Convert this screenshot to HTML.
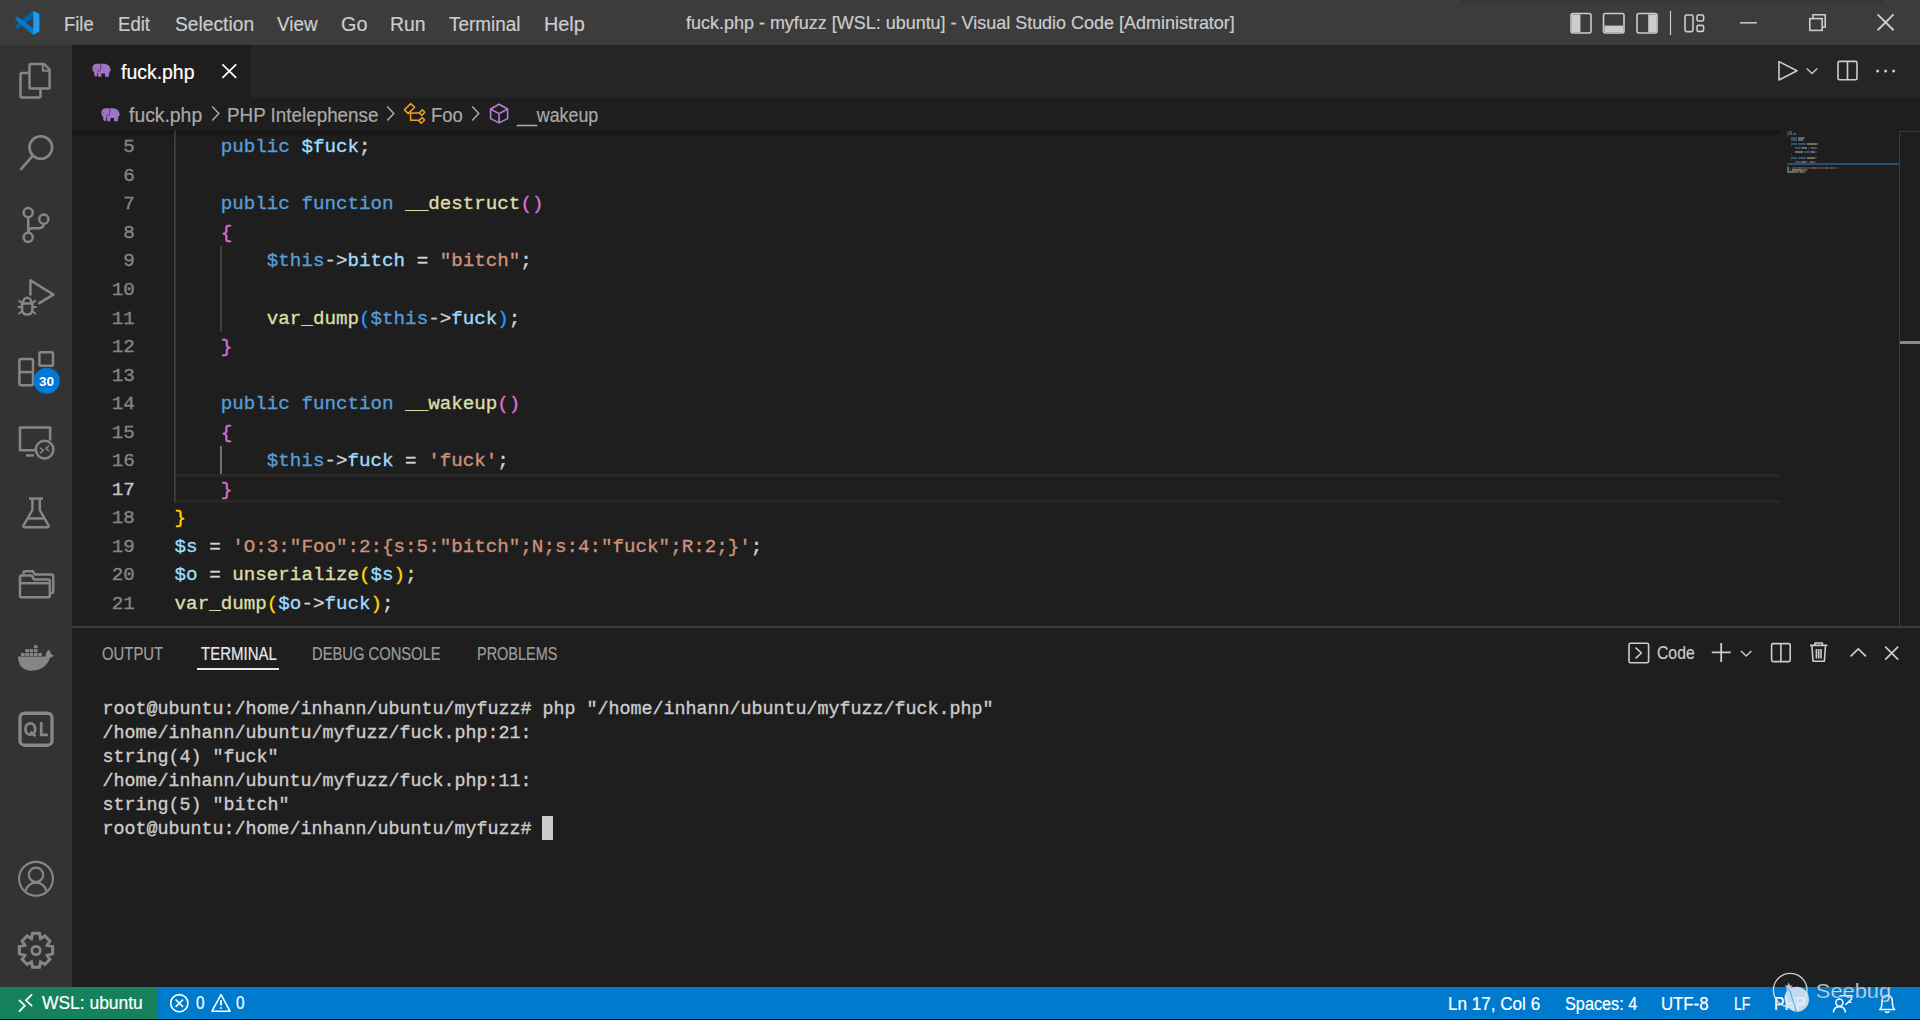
<!DOCTYPE html>
<html><head><meta charset="utf-8">
<style>
html,body{margin:0;padding:0;width:1920px;height:1020px;overflow:hidden;background:#1e1e1e;}
body{position:relative;font-family:"Liberation Sans", sans-serif;}
.a{position:absolute;}
.t{position:absolute;white-space:pre;-webkit-text-stroke:0.2px currentColor;line-height:1;transform-origin:0 0;font-family:"Liberation Sans", sans-serif;}
.cl{position:absolute;-webkit-text-stroke:0.35px currentColor;left:174.6px;white-space:pre;font-family:"Liberation Mono", monospace;font-size:19.22px;line-height:19.22px;color:#d4d4d4;}
.ln{position:absolute;-webkit-text-stroke:0.35px currentColor;left:60px;width:74.8px;text-align:right;font-family:"Liberation Mono", monospace;font-size:19.22px;line-height:19.22px;}
.tl{position:absolute;-webkit-text-stroke:0.35px currentColor;left:102.6px;white-space:pre;font-family:"Liberation Mono", monospace;font-size:18.333px;line-height:18.333px;color:#cccccc;}
svg{position:absolute;overflow:visible;}
</style></head><body>
<!-- title bar -->
<div class="a" style="left:0;top:0;width:1920px;height:45px;background:#3c3c3c"></div>
<div class="a" style="left:1461px;top:0;width:422px;height:5px;background:linear-gradient(#353535,#3c3c3c)"></div>
<!-- activity bar -->
<div class="a" style="left:0;top:45px;width:72px;height:942px;background:#333333"></div>
<!-- tab bar -->
<div class="a" style="left:72px;top:45px;width:1848px;height:53px;background:#252526"></div>
<div class="a" style="left:72px;top:45px;width:179px;height:53px;background:#1e1e1e"></div>
<!-- breadcrumb -->
<div class="a" style="left:72px;top:98px;width:1848px;height:33px;background:#1e1e1e"></div>
<!-- editor scroll shadow -->
<div class="a" style="left:72px;top:131px;width:1707px;height:6px;background:linear-gradient(#111111,rgba(30,30,30,0))"></div>
<!-- current line highlight -->
<div class="a" style="left:176px;top:474px;width:1603px;height:29px;box-sizing:border-box;border-top:3px solid #282828;border-bottom:3px solid #282828"></div>
<!-- indent guides -->
<div class="a" style="left:174px;top:131px;width:1px;height:372px;background:#404040"></div><div class="a" style="left:175px;top:131px;width:1px;height:372px;background:#333333"></div>
<div class="a" style="left:220px;top:246px;width:2px;height:86px;background:#404040"></div>
<div class="a" style="left:220px;top:446px;width:2px;height:28px;background:#707070"></div>
<!-- minimap -->
<div class="a" style="left:1787px;top:163px;width:112px;height:2px;background:#264f78"></div>
<svg style="left:1787px;top:131px;opacity:0.42" width="120" height="50"><rect x="0" y="0" width="1" height="2" fill="#569cd6" fill-opacity="0.45"/><rect x="1" y="0" width="1" height="2" fill="#569cd6" fill-opacity="0.45"/><rect x="2" y="0" width="1" height="2" fill="#569cd6" fill-opacity="1.0"/><rect x="3" y="0" width="1" height="2" fill="#569cd6" fill-opacity="1.0"/><rect x="4" y="0" width="1" height="2" fill="#569cd6" fill-opacity="1.0"/><rect x="0" y="2" width="1" height="2" fill="#569cd6" fill-opacity="1.0"/><rect x="1" y="2" width="1" height="2" fill="#569cd6" fill-opacity="1.0"/><rect x="2" y="2" width="1" height="2" fill="#569cd6" fill-opacity="1.0"/><rect x="3" y="2" width="1" height="2" fill="#569cd6" fill-opacity="1.0"/><rect x="4" y="2" width="1" height="2" fill="#569cd6" fill-opacity="1.0"/><rect x="6" y="2" width="1" height="2" fill="#4ec9b0" fill-opacity="1.0"/><rect x="7" y="2" width="1" height="2" fill="#4ec9b0" fill-opacity="1.0"/><rect x="8" y="2" width="1" height="2" fill="#4ec9b0" fill-opacity="1.0"/><rect x="0" y="4" width="1" height="2" fill="#ffd700" fill-opacity="0.45"/><rect x="4" y="6" width="1" height="2" fill="#569cd6" fill-opacity="1.0"/><rect x="5" y="6" width="1" height="2" fill="#569cd6" fill-opacity="1.0"/><rect x="6" y="6" width="1" height="2" fill="#569cd6" fill-opacity="1.0"/><rect x="7" y="6" width="1" height="2" fill="#569cd6" fill-opacity="1.0"/><rect x="8" y="6" width="1" height="2" fill="#569cd6" fill-opacity="1.0"/><rect x="9" y="6" width="1" height="2" fill="#569cd6" fill-opacity="1.0"/><rect x="11" y="6" width="1" height="2" fill="#9cdcfe" fill-opacity="1.0"/><rect x="12" y="6" width="1" height="2" fill="#9cdcfe" fill-opacity="1.0"/><rect x="13" y="6" width="1" height="2" fill="#9cdcfe" fill-opacity="1.0"/><rect x="14" y="6" width="1" height="2" fill="#9cdcfe" fill-opacity="1.0"/><rect x="15" y="6" width="1" height="2" fill="#9cdcfe" fill-opacity="1.0"/><rect x="16" y="6" width="1" height="2" fill="#9cdcfe" fill-opacity="1.0"/><rect x="17" y="6" width="1" height="2" fill="#d4d4d4" fill-opacity="0.45"/><rect x="4" y="8" width="1" height="2" fill="#569cd6" fill-opacity="1.0"/><rect x="5" y="8" width="1" height="2" fill="#569cd6" fill-opacity="1.0"/><rect x="6" y="8" width="1" height="2" fill="#569cd6" fill-opacity="1.0"/><rect x="7" y="8" width="1" height="2" fill="#569cd6" fill-opacity="1.0"/><rect x="8" y="8" width="1" height="2" fill="#569cd6" fill-opacity="1.0"/><rect x="9" y="8" width="1" height="2" fill="#569cd6" fill-opacity="1.0"/><rect x="11" y="8" width="1" height="2" fill="#9cdcfe" fill-opacity="1.0"/><rect x="12" y="8" width="1" height="2" fill="#9cdcfe" fill-opacity="1.0"/><rect x="13" y="8" width="1" height="2" fill="#9cdcfe" fill-opacity="1.0"/><rect x="14" y="8" width="1" height="2" fill="#9cdcfe" fill-opacity="1.0"/><rect x="15" y="8" width="1" height="2" fill="#9cdcfe" fill-opacity="1.0"/><rect x="16" y="8" width="1" height="2" fill="#d4d4d4" fill-opacity="0.45"/><rect x="4" y="12" width="1" height="2" fill="#569cd6" fill-opacity="1.0"/><rect x="5" y="12" width="1" height="2" fill="#569cd6" fill-opacity="1.0"/><rect x="6" y="12" width="1" height="2" fill="#569cd6" fill-opacity="1.0"/><rect x="7" y="12" width="1" height="2" fill="#569cd6" fill-opacity="1.0"/><rect x="8" y="12" width="1" height="2" fill="#569cd6" fill-opacity="1.0"/><rect x="9" y="12" width="1" height="2" fill="#569cd6" fill-opacity="1.0"/><rect x="11" y="12" width="1" height="2" fill="#569cd6" fill-opacity="1.0"/><rect x="12" y="12" width="1" height="2" fill="#569cd6" fill-opacity="1.0"/><rect x="13" y="12" width="1" height="2" fill="#569cd6" fill-opacity="1.0"/><rect x="14" y="12" width="1" height="2" fill="#569cd6" fill-opacity="1.0"/><rect x="15" y="12" width="1" height="2" fill="#569cd6" fill-opacity="1.0"/><rect x="16" y="12" width="1" height="2" fill="#569cd6" fill-opacity="1.0"/><rect x="17" y="12" width="1" height="2" fill="#569cd6" fill-opacity="1.0"/><rect x="18" y="12" width="1" height="2" fill="#569cd6" fill-opacity="1.0"/><rect x="20" y="12" width="1" height="2" fill="#dcdcaa" fill-opacity="1.0"/><rect x="21" y="12" width="1" height="2" fill="#dcdcaa" fill-opacity="1.0"/><rect x="22" y="12" width="1" height="2" fill="#dcdcaa" fill-opacity="1.0"/><rect x="23" y="12" width="1" height="2" fill="#dcdcaa" fill-opacity="1.0"/><rect x="24" y="12" width="1" height="2" fill="#dcdcaa" fill-opacity="1.0"/><rect x="25" y="12" width="1" height="2" fill="#dcdcaa" fill-opacity="1.0"/><rect x="26" y="12" width="1" height="2" fill="#dcdcaa" fill-opacity="1.0"/><rect x="27" y="12" width="1" height="2" fill="#dcdcaa" fill-opacity="1.0"/><rect x="28" y="12" width="1" height="2" fill="#dcdcaa" fill-opacity="1.0"/><rect x="29" y="12" width="1" height="2" fill="#dcdcaa" fill-opacity="1.0"/><rect x="30" y="12" width="1" height="2" fill="#da70d6" fill-opacity="0.45"/><rect x="31" y="12" width="1" height="2" fill="#da70d6" fill-opacity="0.45"/><rect x="4" y="14" width="1" height="2" fill="#da70d6" fill-opacity="0.45"/><rect x="8" y="16" width="1" height="2" fill="#569cd6" fill-opacity="1.0"/><rect x="9" y="16" width="1" height="2" fill="#569cd6" fill-opacity="1.0"/><rect x="10" y="16" width="1" height="2" fill="#569cd6" fill-opacity="1.0"/><rect x="11" y="16" width="1" height="2" fill="#569cd6" fill-opacity="1.0"/><rect x="12" y="16" width="1" height="2" fill="#569cd6" fill-opacity="1.0"/><rect x="13" y="16" width="1" height="2" fill="#d4d4d4" fill-opacity="0.45"/><rect x="14" y="16" width="1" height="2" fill="#d4d4d4" fill-opacity="0.45"/><rect x="15" y="16" width="1" height="2" fill="#9cdcfe" fill-opacity="1.0"/><rect x="16" y="16" width="1" height="2" fill="#9cdcfe" fill-opacity="1.0"/><rect x="17" y="16" width="1" height="2" fill="#9cdcfe" fill-opacity="1.0"/><rect x="18" y="16" width="1" height="2" fill="#9cdcfe" fill-opacity="1.0"/><rect x="19" y="16" width="1" height="2" fill="#9cdcfe" fill-opacity="1.0"/><rect x="21" y="16" width="1" height="2" fill="#d4d4d4" fill-opacity="0.45"/><rect x="23" y="16" width="1" height="2" fill="#ce9178" fill-opacity="0.45"/><rect x="24" y="16" width="1" height="2" fill="#ce9178" fill-opacity="1.0"/><rect x="25" y="16" width="1" height="2" fill="#ce9178" fill-opacity="1.0"/><rect x="26" y="16" width="1" height="2" fill="#ce9178" fill-opacity="1.0"/><rect x="27" y="16" width="1" height="2" fill="#ce9178" fill-opacity="1.0"/><rect x="28" y="16" width="1" height="2" fill="#ce9178" fill-opacity="1.0"/><rect x="29" y="16" width="1" height="2" fill="#ce9178" fill-opacity="0.45"/><rect x="30" y="16" width="1" height="2" fill="#d4d4d4" fill-opacity="0.45"/><rect x="8" y="20" width="1" height="2" fill="#dcdcaa" fill-opacity="1.0"/><rect x="9" y="20" width="1" height="2" fill="#dcdcaa" fill-opacity="1.0"/><rect x="10" y="20" width="1" height="2" fill="#dcdcaa" fill-opacity="1.0"/><rect x="11" y="20" width="1" height="2" fill="#dcdcaa" fill-opacity="1.0"/><rect x="12" y="20" width="1" height="2" fill="#dcdcaa" fill-opacity="1.0"/><rect x="13" y="20" width="1" height="2" fill="#dcdcaa" fill-opacity="1.0"/><rect x="14" y="20" width="1" height="2" fill="#dcdcaa" fill-opacity="1.0"/><rect x="15" y="20" width="1" height="2" fill="#dcdcaa" fill-opacity="1.0"/><rect x="16" y="20" width="1" height="2" fill="#179fff" fill-opacity="0.45"/><rect x="17" y="20" width="1" height="2" fill="#569cd6" fill-opacity="1.0"/><rect x="18" y="20" width="1" height="2" fill="#569cd6" fill-opacity="1.0"/><rect x="19" y="20" width="1" height="2" fill="#569cd6" fill-opacity="1.0"/><rect x="20" y="20" width="1" height="2" fill="#569cd6" fill-opacity="1.0"/><rect x="21" y="20" width="1" height="2" fill="#569cd6" fill-opacity="1.0"/><rect x="22" y="20" width="1" height="2" fill="#d4d4d4" fill-opacity="0.45"/><rect x="23" y="20" width="1" height="2" fill="#d4d4d4" fill-opacity="0.45"/><rect x="24" y="20" width="1" height="2" fill="#9cdcfe" fill-opacity="1.0"/><rect x="25" y="20" width="1" height="2" fill="#9cdcfe" fill-opacity="1.0"/><rect x="26" y="20" width="1" height="2" fill="#9cdcfe" fill-opacity="1.0"/><rect x="27" y="20" width="1" height="2" fill="#9cdcfe" fill-opacity="1.0"/><rect x="28" y="20" width="1" height="2" fill="#179fff" fill-opacity="0.45"/><rect x="29" y="20" width="1" height="2" fill="#d4d4d4" fill-opacity="0.45"/><rect x="4" y="22" width="1" height="2" fill="#da70d6" fill-opacity="0.45"/><rect x="4" y="26" width="1" height="2" fill="#569cd6" fill-opacity="1.0"/><rect x="5" y="26" width="1" height="2" fill="#569cd6" fill-opacity="1.0"/><rect x="6" y="26" width="1" height="2" fill="#569cd6" fill-opacity="1.0"/><rect x="7" y="26" width="1" height="2" fill="#569cd6" fill-opacity="1.0"/><rect x="8" y="26" width="1" height="2" fill="#569cd6" fill-opacity="1.0"/><rect x="9" y="26" width="1" height="2" fill="#569cd6" fill-opacity="1.0"/><rect x="11" y="26" width="1" height="2" fill="#569cd6" fill-opacity="1.0"/><rect x="12" y="26" width="1" height="2" fill="#569cd6" fill-opacity="1.0"/><rect x="13" y="26" width="1" height="2" fill="#569cd6" fill-opacity="1.0"/><rect x="14" y="26" width="1" height="2" fill="#569cd6" fill-opacity="1.0"/><rect x="15" y="26" width="1" height="2" fill="#569cd6" fill-opacity="1.0"/><rect x="16" y="26" width="1" height="2" fill="#569cd6" fill-opacity="1.0"/><rect x="17" y="26" width="1" height="2" fill="#569cd6" fill-opacity="1.0"/><rect x="18" y="26" width="1" height="2" fill="#569cd6" fill-opacity="1.0"/><rect x="20" y="26" width="1" height="2" fill="#dcdcaa" fill-opacity="1.0"/><rect x="21" y="26" width="1" height="2" fill="#dcdcaa" fill-opacity="1.0"/><rect x="22" y="26" width="1" height="2" fill="#dcdcaa" fill-opacity="1.0"/><rect x="23" y="26" width="1" height="2" fill="#dcdcaa" fill-opacity="1.0"/><rect x="24" y="26" width="1" height="2" fill="#dcdcaa" fill-opacity="1.0"/><rect x="25" y="26" width="1" height="2" fill="#dcdcaa" fill-opacity="1.0"/><rect x="26" y="26" width="1" height="2" fill="#dcdcaa" fill-opacity="1.0"/><rect x="27" y="26" width="1" height="2" fill="#dcdcaa" fill-opacity="1.0"/><rect x="28" y="26" width="1" height="2" fill="#da70d6" fill-opacity="0.45"/><rect x="29" y="26" width="1" height="2" fill="#da70d6" fill-opacity="0.45"/><rect x="4" y="28" width="1" height="2" fill="#da70d6" fill-opacity="0.45"/><rect x="8" y="30" width="1" height="2" fill="#569cd6" fill-opacity="1.0"/><rect x="9" y="30" width="1" height="2" fill="#569cd6" fill-opacity="1.0"/><rect x="10" y="30" width="1" height="2" fill="#569cd6" fill-opacity="1.0"/><rect x="11" y="30" width="1" height="2" fill="#569cd6" fill-opacity="1.0"/><rect x="12" y="30" width="1" height="2" fill="#569cd6" fill-opacity="1.0"/><rect x="13" y="30" width="1" height="2" fill="#d4d4d4" fill-opacity="0.45"/><rect x="14" y="30" width="1" height="2" fill="#d4d4d4" fill-opacity="0.45"/><rect x="15" y="30" width="1" height="2" fill="#9cdcfe" fill-opacity="1.0"/><rect x="16" y="30" width="1" height="2" fill="#9cdcfe" fill-opacity="1.0"/><rect x="17" y="30" width="1" height="2" fill="#9cdcfe" fill-opacity="1.0"/><rect x="18" y="30" width="1" height="2" fill="#9cdcfe" fill-opacity="1.0"/><rect x="20" y="30" width="1" height="2" fill="#d4d4d4" fill-opacity="0.45"/><rect x="22" y="30" width="1" height="2" fill="#ce9178" fill-opacity="0.45"/><rect x="23" y="30" width="1" height="2" fill="#ce9178" fill-opacity="1.0"/><rect x="24" y="30" width="1" height="2" fill="#ce9178" fill-opacity="1.0"/><rect x="25" y="30" width="1" height="2" fill="#ce9178" fill-opacity="1.0"/><rect x="26" y="30" width="1" height="2" fill="#ce9178" fill-opacity="1.0"/><rect x="27" y="30" width="1" height="2" fill="#ce9178" fill-opacity="0.45"/><rect x="28" y="30" width="1" height="2" fill="#d4d4d4" fill-opacity="0.45"/><rect x="4" y="32" width="1" height="2" fill="#da70d6" fill-opacity="0.45"/><rect x="0" y="34" width="1" height="2" fill="#ffd700" fill-opacity="0.45"/><rect x="0" y="36" width="1" height="2" fill="#9cdcfe" fill-opacity="1.0"/><rect x="1" y="36" width="1" height="2" fill="#9cdcfe" fill-opacity="1.0"/><rect x="3" y="36" width="1" height="2" fill="#d4d4d4" fill-opacity="0.45"/><rect x="5" y="36" width="1" height="2" fill="#ce9178" fill-opacity="0.45"/><rect x="6" y="36" width="1" height="2" fill="#ce9178" fill-opacity="1.0"/><rect x="7" y="36" width="1" height="2" fill="#ce9178" fill-opacity="0.45"/><rect x="8" y="36" width="1" height="2" fill="#ce9178" fill-opacity="1.0"/><rect x="9" y="36" width="1" height="2" fill="#ce9178" fill-opacity="0.45"/><rect x="10" y="36" width="1" height="2" fill="#ce9178" fill-opacity="0.45"/><rect x="11" y="36" width="1" height="2" fill="#ce9178" fill-opacity="1.0"/><rect x="12" y="36" width="1" height="2" fill="#ce9178" fill-opacity="1.0"/><rect x="13" y="36" width="1" height="2" fill="#ce9178" fill-opacity="1.0"/><rect x="14" y="36" width="1" height="2" fill="#ce9178" fill-opacity="0.45"/><rect x="15" y="36" width="1" height="2" fill="#ce9178" fill-opacity="0.45"/><rect x="16" y="36" width="1" height="2" fill="#ce9178" fill-opacity="1.0"/><rect x="17" y="36" width="1" height="2" fill="#ce9178" fill-opacity="0.45"/><rect x="18" y="36" width="1" height="2" fill="#ce9178" fill-opacity="0.45"/><rect x="19" y="36" width="1" height="2" fill="#ce9178" fill-opacity="1.0"/><rect x="20" y="36" width="1" height="2" fill="#ce9178" fill-opacity="0.45"/><rect x="21" y="36" width="1" height="2" fill="#ce9178" fill-opacity="1.0"/><rect x="22" y="36" width="1" height="2" fill="#ce9178" fill-opacity="0.45"/><rect x="23" y="36" width="1" height="2" fill="#ce9178" fill-opacity="0.45"/><rect x="24" y="36" width="1" height="2" fill="#ce9178" fill-opacity="1.0"/><rect x="25" y="36" width="1" height="2" fill="#ce9178" fill-opacity="1.0"/><rect x="26" y="36" width="1" height="2" fill="#ce9178" fill-opacity="1.0"/><rect x="27" y="36" width="1" height="2" fill="#ce9178" fill-opacity="1.0"/><rect x="28" y="36" width="1" height="2" fill="#ce9178" fill-opacity="1.0"/><rect x="29" y="36" width="1" height="2" fill="#ce9178" fill-opacity="0.45"/><rect x="30" y="36" width="1" height="2" fill="#ce9178" fill-opacity="0.45"/><rect x="31" y="36" width="1" height="2" fill="#ce9178" fill-opacity="1.0"/><rect x="32" y="36" width="1" height="2" fill="#ce9178" fill-opacity="0.45"/><rect x="33" y="36" width="1" height="2" fill="#ce9178" fill-opacity="1.0"/><rect x="34" y="36" width="1" height="2" fill="#ce9178" fill-opacity="0.45"/><rect x="35" y="36" width="1" height="2" fill="#ce9178" fill-opacity="1.0"/><rect x="36" y="36" width="1" height="2" fill="#ce9178" fill-opacity="0.45"/><rect x="37" y="36" width="1" height="2" fill="#ce9178" fill-opacity="0.45"/><rect x="38" y="36" width="1" height="2" fill="#ce9178" fill-opacity="1.0"/><rect x="39" y="36" width="1" height="2" fill="#ce9178" fill-opacity="1.0"/><rect x="40" y="36" width="1" height="2" fill="#ce9178" fill-opacity="1.0"/><rect x="41" y="36" width="1" height="2" fill="#ce9178" fill-opacity="1.0"/><rect x="42" y="36" width="1" height="2" fill="#ce9178" fill-opacity="0.45"/><rect x="43" y="36" width="1" height="2" fill="#ce9178" fill-opacity="0.45"/><rect x="44" y="36" width="1" height="2" fill="#ce9178" fill-opacity="1.0"/><rect x="45" y="36" width="1" height="2" fill="#ce9178" fill-opacity="0.45"/><rect x="46" y="36" width="1" height="2" fill="#ce9178" fill-opacity="1.0"/><rect x="47" y="36" width="1" height="2" fill="#ce9178" fill-opacity="0.45"/><rect x="48" y="36" width="1" height="2" fill="#ce9178" fill-opacity="0.45"/><rect x="49" y="36" width="1" height="2" fill="#ce9178" fill-opacity="0.45"/><rect x="50" y="36" width="1" height="2" fill="#d4d4d4" fill-opacity="0.45"/><rect x="0" y="38" width="1" height="2" fill="#9cdcfe" fill-opacity="1.0"/><rect x="1" y="38" width="1" height="2" fill="#9cdcfe" fill-opacity="1.0"/><rect x="3" y="38" width="1" height="2" fill="#d4d4d4" fill-opacity="0.45"/><rect x="5" y="38" width="1" height="2" fill="#dcdcaa" fill-opacity="1.0"/><rect x="6" y="38" width="1" height="2" fill="#dcdcaa" fill-opacity="1.0"/><rect x="7" y="38" width="1" height="2" fill="#dcdcaa" fill-opacity="1.0"/><rect x="8" y="38" width="1" height="2" fill="#dcdcaa" fill-opacity="1.0"/><rect x="9" y="38" width="1" height="2" fill="#dcdcaa" fill-opacity="1.0"/><rect x="10" y="38" width="1" height="2" fill="#dcdcaa" fill-opacity="1.0"/><rect x="11" y="38" width="1" height="2" fill="#dcdcaa" fill-opacity="1.0"/><rect x="12" y="38" width="1" height="2" fill="#dcdcaa" fill-opacity="1.0"/><rect x="13" y="38" width="1" height="2" fill="#dcdcaa" fill-opacity="1.0"/><rect x="14" y="38" width="1" height="2" fill="#dcdcaa" fill-opacity="1.0"/><rect x="15" y="38" width="1" height="2" fill="#dcdcaa" fill-opacity="1.0"/><rect x="16" y="38" width="1" height="2" fill="#ffd700" fill-opacity="0.45"/><rect x="17" y="38" width="1" height="2" fill="#9cdcfe" fill-opacity="1.0"/><rect x="18" y="38" width="1" height="2" fill="#9cdcfe" fill-opacity="1.0"/><rect x="19" y="38" width="1" height="2" fill="#ffd700" fill-opacity="0.45"/><rect x="20" y="38" width="1" height="2" fill="#d4d4d4" fill-opacity="0.45"/><rect x="0" y="40" width="1" height="2" fill="#dcdcaa" fill-opacity="1.0"/><rect x="1" y="40" width="1" height="2" fill="#dcdcaa" fill-opacity="1.0"/><rect x="2" y="40" width="1" height="2" fill="#dcdcaa" fill-opacity="1.0"/><rect x="3" y="40" width="1" height="2" fill="#dcdcaa" fill-opacity="1.0"/><rect x="4" y="40" width="1" height="2" fill="#dcdcaa" fill-opacity="1.0"/><rect x="5" y="40" width="1" height="2" fill="#dcdcaa" fill-opacity="1.0"/><rect x="6" y="40" width="1" height="2" fill="#dcdcaa" fill-opacity="1.0"/><rect x="7" y="40" width="1" height="2" fill="#dcdcaa" fill-opacity="1.0"/><rect x="8" y="40" width="1" height="2" fill="#ffd700" fill-opacity="0.45"/><rect x="9" y="40" width="1" height="2" fill="#9cdcfe" fill-opacity="1.0"/><rect x="10" y="40" width="1" height="2" fill="#9cdcfe" fill-opacity="1.0"/><rect x="11" y="40" width="1" height="2" fill="#d4d4d4" fill-opacity="0.45"/><rect x="12" y="40" width="1" height="2" fill="#d4d4d4" fill-opacity="0.45"/><rect x="13" y="40" width="1" height="2" fill="#9cdcfe" fill-opacity="1.0"/><rect x="14" y="40" width="1" height="2" fill="#9cdcfe" fill-opacity="1.0"/><rect x="15" y="40" width="1" height="2" fill="#9cdcfe" fill-opacity="1.0"/><rect x="16" y="40" width="1" height="2" fill="#9cdcfe" fill-opacity="1.0"/><rect x="17" y="40" width="1" height="2" fill="#ffd700" fill-opacity="0.45"/><rect x="18" y="40" width="1" height="2" fill="#d4d4d4" fill-opacity="0.45"/></svg>
<!-- vertical scrollbar line & overview marker -->
<div class="a" style="left:1899px;top:131px;width:1px;height:496px;background:#3c3c3c"></div>
<div class="a" style="left:1899px;top:131px;width:21px;height:1px;background:#3c3c3c"></div>
<div class="a" style="left:1900px;top:341px;width:20px;height:3px;background:#8b8b8b"></div>
<!-- panel -->
<div class="a" style="left:72px;top:626px;width:1848px;height:2px;background:#3c3c3c"></div>
<div class="a" style="left:197px;top:668px;width:82px;height:2px;background:#e7e7e7"></div>
<!-- status bar -->
<div class="a" style="left:0;top:987px;width:1920px;height:32px;background:#007acc"></div>
<div class="a" style="left:0;top:987px;width:157px;height:32px;background:#16825d"></div>
<div class="a" style="left:0;top:1019px;width:1920px;height:1px;background:#0b0b0b"></div>

<div class="t" style="left:63.88px;top:13.67px;font-size:20.0px;color:#cccccc;font-weight:normal;transform:scaleX(0.9195)">File</div>
<div class="t" style="left:117.57px;top:13.67px;font-size:20.0px;color:#cccccc;font-weight:normal;transform:scaleX(0.9290)">Edit</div>
<div class="t" style="left:174.70px;top:13.67px;font-size:20.0px;color:#cccccc;font-weight:normal;transform:scaleX(0.9612)">Selection</div>
<div class="t" style="left:276.80px;top:13.67px;font-size:20.0px;color:#cccccc;font-weight:normal;transform:scaleX(0.9416)">View</div>
<div class="t" style="left:340.71px;top:13.67px;font-size:20.0px;color:#cccccc;font-weight:normal;transform:scaleX(0.9900)">Go</div>
<div class="t" style="left:390.03px;top:13.67px;font-size:20.0px;color:#cccccc;font-weight:normal;transform:scaleX(0.9691)">Run</div>
<div class="t" style="left:449.00px;top:13.67px;font-size:20.0px;color:#cccccc;font-weight:normal;transform:scaleX(0.9450)">Terminal</div>
<div class="t" style="left:544.31px;top:13.67px;font-size:20.0px;color:#cccccc;font-weight:normal;transform:scaleX(0.9923)">Help</div>
<div class="t" style="left:685.80px;top:12.52px;font-size:19.0px;color:#cccccc;font-weight:normal;transform:scaleX(0.9455)">fuck.php - myfuzz [WSL: ubuntu] - Visual Studio Code [Administrator]</div>
<div class="t" style="left:120.60px;top:62.59px;font-size:19.5px;color:#ffffff;font-weight:normal;transform:scaleX(0.9963)">fuck.php</div>
<div class="t" style="left:129.40px;top:105.99px;font-size:19.5px;color:#a9a9a9;font-weight:normal;transform:scaleX(0.9923)">fuck.php</div>
<div class="t" style="left:227.03px;top:105.99px;font-size:19.5px;color:#a9a9a9;font-weight:normal;transform:scaleX(0.9656)">PHP Intelephense</div>
<div class="t" style="left:430.75px;top:105.99px;font-size:19.5px;color:#a9a9a9;font-weight:normal;transform:scaleX(0.9464)">Foo</div>
<div class="t" style="left:516.91px;top:105.99px;font-size:19.5px;color:#a9a9a9;font-weight:normal;transform:scaleX(0.9139)">__wakeup</div>
<div class="t" style="left:102.20px;top:645.06px;font-size:18.0px;color:#9d9d9d;font-weight:normal;transform:scaleX(0.8270)">OUTPUT</div>
<div class="t" style="left:200.50px;top:645.06px;font-size:18.0px;color:#e7e7e7;font-weight:normal;transform:scaleX(0.8341)">TERMINAL</div>
<div class="t" style="left:312.18px;top:645.06px;font-size:18.0px;color:#9d9d9d;font-weight:normal;transform:scaleX(0.8191)">DEBUG CONSOLE</div>
<div class="t" style="left:476.80px;top:645.06px;font-size:18.0px;color:#9d9d9d;font-weight:normal;transform:scaleX(0.8039)">PROBLEMS</div>
<div class="t" style="left:1657.30px;top:644.34px;font-size:18.5px;color:#cccccc;font-weight:normal;transform:scaleX(0.8512)">Code</div>
<div class="t" style="left:41.50px;top:994.26px;font-size:18.0px;color:#ffffff;font-weight:normal;transform:scaleX(0.9684)">WSL: ubuntu</div>
<div class="t" style="left:195.50px;top:994.26px;font-size:18.0px;color:#ffffff;font-weight:normal;transform:scaleX(0.8500)">0</div>
<div class="t" style="left:236.30px;top:994.26px;font-size:18.0px;color:#ffffff;font-weight:normal;transform:scaleX(0.8500)">0</div>
<div class="t" style="left:1447.85px;top:994.66px;font-size:18.0px;color:#ffffff;font-weight:normal;transform:scaleX(0.9494)">Ln 17, Col 6</div>
<div class="t" style="left:1565.20px;top:994.66px;font-size:18.0px;color:#ffffff;font-weight:normal;transform:scaleX(0.9033)">Spaces: 4</div>
<div class="t" style="left:1661.27px;top:994.66px;font-size:18.0px;color:#ffffff;font-weight:normal;transform:scaleX(0.9323)">UTF-8</div>
<div class="t" style="left:1733.72px;top:994.66px;font-size:18.0px;color:#ffffff;font-weight:normal;transform:scaleX(0.7846)">LF</div>
<div class="t" style="left:1774.13px;top:994.66px;font-size:18.0px;color:#ffffff;font-weight:normal;transform:scaleX(0.8693)">PHP</div>
<div class="ln" style="top:138.28px;color:#858585">5</div>
<div class="ln" style="top:166.82px;color:#858585">6</div>
<div class="ln" style="top:195.36px;color:#858585">7</div>
<div class="ln" style="top:223.90px;color:#858585">8</div>
<div class="ln" style="top:252.44px;color:#858585">9</div>
<div class="ln" style="top:280.98px;color:#858585">10</div>
<div class="ln" style="top:309.52px;color:#858585">11</div>
<div class="ln" style="top:338.06px;color:#858585">12</div>
<div class="ln" style="top:366.60px;color:#858585">13</div>
<div class="ln" style="top:395.14px;color:#858585">14</div>
<div class="ln" style="top:423.68px;color:#858585">15</div>
<div class="ln" style="top:452.22px;color:#858585">16</div>
<div class="ln" style="top:480.76px;color:#c6c6c6">17</div>
<div class="ln" style="top:509.30px;color:#858585">18</div>
<div class="ln" style="top:537.84px;color:#858585">19</div>
<div class="ln" style="top:566.38px;color:#858585">20</div>
<div class="ln" style="top:594.92px;color:#858585">21</div>
<div class="cl" style="top:138.28px"><span style="color:#d4d4d4">    </span><span style="color:#569cd6">public</span><span style="color:#d4d4d4"> </span><span style="color:#9cdcfe">$fuck</span><span style="color:#d4d4d4">;</span></div>
<div class="cl" style="top:166.82px"></div>
<div class="cl" style="top:195.36px"><span style="color:#d4d4d4">    </span><span style="color:#569cd6">public</span><span style="color:#d4d4d4"> </span><span style="color:#569cd6">function</span><span style="color:#d4d4d4"> </span><span style="color:#dcdcaa">__destruct</span><span style="color:#da70d6">()</span></div>
<div class="cl" style="top:223.90px"><span style="color:#d4d4d4">    </span><span style="color:#da70d6">{</span></div>
<div class="cl" style="top:252.44px"><span style="color:#d4d4d4">        </span><span style="color:#569cd6">$this</span><span style="color:#d4d4d4">-&gt;</span><span style="color:#9cdcfe">bitch</span><span style="color:#d4d4d4"> = </span><span style="color:#ce9178">&quot;bitch&quot;</span><span style="color:#d4d4d4">;</span></div>
<div class="cl" style="top:280.98px"></div>
<div class="cl" style="top:309.52px"><span style="color:#d4d4d4">        </span><span style="color:#dcdcaa">var_dump</span><span style="color:#179fff">(</span><span style="color:#569cd6">$this</span><span style="color:#d4d4d4">-&gt;</span><span style="color:#9cdcfe">fuck</span><span style="color:#179fff">)</span><span style="color:#d4d4d4">;</span></div>
<div class="cl" style="top:338.06px"><span style="color:#d4d4d4">    </span><span style="color:#da70d6">}</span></div>
<div class="cl" style="top:366.60px"></div>
<div class="cl" style="top:395.14px"><span style="color:#d4d4d4">    </span><span style="color:#569cd6">public</span><span style="color:#d4d4d4"> </span><span style="color:#569cd6">function</span><span style="color:#d4d4d4"> </span><span style="color:#dcdcaa">__wakeup</span><span style="color:#da70d6">()</span></div>
<div class="cl" style="top:423.68px"><span style="color:#d4d4d4">    </span><span style="color:#da70d6">{</span></div>
<div class="cl" style="top:452.22px"><span style="color:#d4d4d4">        </span><span style="color:#569cd6">$this</span><span style="color:#d4d4d4">-&gt;</span><span style="color:#9cdcfe">fuck</span><span style="color:#d4d4d4"> = </span><span style="color:#ce9178">&#x27;fuck&#x27;</span><span style="color:#d4d4d4">;</span></div>
<div class="cl" style="top:480.76px"><span style="color:#d4d4d4">    </span><span style="color:#da70d6">}</span></div>
<div class="cl" style="top:509.30px"><span style="color:#ffd700">}</span></div>
<div class="cl" style="top:537.84px"><span style="color:#9cdcfe">$s</span><span style="color:#d4d4d4"> = </span><span style="color:#ce9178">&#x27;O:3:&quot;Foo&quot;:2:{s:5:&quot;bitch&quot;;N;s:4:&quot;fuck&quot;;R:2;}&#x27;</span><span style="color:#d4d4d4">;</span></div>
<div class="cl" style="top:566.38px"><span style="color:#9cdcfe">$o</span><span style="color:#d4d4d4"> = </span><span style="color:#dcdcaa">unserialize</span><span style="color:#ffd700">(</span><span style="color:#9cdcfe">$s</span><span style="color:#ffd700">)</span><span style="color:#d4d4d4">;</span></div>
<div class="cl" style="top:594.92px"><span style="color:#dcdcaa">var_dump</span><span style="color:#ffd700">(</span><span style="color:#9cdcfe">$o</span><span style="color:#d4d4d4">-&gt;</span><span style="color:#9cdcfe">fuck</span><span style="color:#ffd700">)</span><span style="color:#d4d4d4">;</span></div>
<div class="tl" style="top:701.26px">root@ubuntu:/home/inhann/ubuntu/myfuzz# php &quot;/home/inhann/ubuntu/myfuzz/fuck.php&quot;</div>
<div class="tl" style="top:725.11px">/home/inhann/ubuntu/myfuzz/fuck.php:21:</div>
<div class="tl" style="top:748.96px">string(4) &quot;fuck&quot;</div>
<div class="tl" style="top:772.81px">/home/inhann/ubuntu/myfuzz/fuck.php:11:</div>
<div class="tl" style="top:796.66px">string(5) &quot;bitch&quot;</div>
<div class="tl" style="top:820.51px">root@ubuntu:/home/inhann/ubuntu/myfuzz# </div>
<!-- terminal cursor -->
<div class="a" style="left:542px;top:816px;width:11px;height:24px;background:#cccccc"></div>

<!-- activity bar icons -->
<svg style="left:0;top:0" width="72" height="1000" fill="none" stroke="#868686" stroke-width="2.5" stroke-linejoin="round">
  <!-- explorer -->
  <path d="M28.8 73.1 H21.9 a1.4 1.4 0 0 0 -1.4 1.4 V96.1 a1.4 1.4 0 0 0 1.4 1.4 H39.1 a1.4 1.4 0 0 0 1.4 -1.4 V89"/>
  <path d="M30.9 64 H44.2 L49.6 69.6 V87.2 a1.4 1.4 0 0 1 -1.4 1.4 H30.9 a1.4 1.4 0 0 1 -1.4 -1.4 V65.4 a1.4 1.4 0 0 1 1.4 -1.4 Z"/>
  <path d="M42.9 64.2 V70.7 H49.4" stroke-width="2"/>
  <!-- search -->
  <circle cx="40.8" cy="147.5" r="11.3" stroke-width="2.6"/>
  <path d="M32.6 155.8 L20.4 169.8" stroke-width="2.6"/>
  <!-- source control -->
  <circle cx="28.2" cy="212.6" r="4.6"/>
  <circle cx="28.2" cy="237.3" r="4.6"/>
  <circle cx="43.8" cy="219.2" r="4.6"/>
  <path d="M28.2 217.2 V232.7"/>
  <path d="M43.8 223.8 C43.8 227 42 228.2 38.5 228.2 H33 C30 228.2 28.2 229.5 28.2 232"/>
  <!-- run & debug -->
  <path d="M30.4 295.6 V280.2 L53.4 294.6 L38.4 303.6"/>
  <path d="M22 303.6 V309 C22 312.6 24.2 314.6 27.2 314.6 C30.2 314.6 32.4 312.6 32.4 309 V303.6 Z"/>
  <path d="M23 303.4 C23 300 24.8 297.8 27.2 297.8 C29.6 297.8 31.4 300 31.4 303.4"/>
  <path d="M18.4 300.4 L22 302.8 M36 300.4 L32.4 302.8 M17.6 307 H22 M36.8 307 H32.4 M18.4 314 L22 311.2 M36 314 L32.4 311.2" stroke-width="2"/>
  <!-- extensions -->
  <rect x="19.4" y="359" width="13.6" height="26.2" rx="1.6"/><path d="M19.4 372.1 H33"/>
  <rect x="39.4" y="352.2" width="13.6" height="13.6" rx="1.6"/>
  <!-- remote explorer -->
  <path d="M36 450.3 H20 V427.5 H50.1 V440.5"/>
  <path d="M26 455.4 H34"/>
  <circle cx="44.6" cy="449.6" r="8.8"/>
  <path d="M40.4 448 L43.4 450.4 L40.4 452.8 M48.8 446 L45.8 448.4 L48.8 450.8" stroke-width="1.5" stroke-linecap="round"/>
  <!-- testing flask -->
  <path d="M29 498.6 H43"/>
  <path d="M32.4 499 V510 L23.6 525.4 a1.2 1.2 0 0 0 1 1.8 H47.4 a1.2 1.2 0 0 0 1 -1.8 L39.8 510 V499"/>
  <path d="M27.6 518.4 H44.4"/>
  <!-- folders -->
  <path d="M23.6 574.6 V572.6 a1.4 1.4 0 0 1 1.4 -1.4 H32.8 L35 574.6 H51.8 a1.4 1.4 0 0 1 1.4 1.4 V591.6 a1.4 1.4 0 0 1 -1.4 1.4 H50"/>
  <path d="M20 577 a1.4 1.4 0 0 1 1.4 -1.4 H31.8 L34.2 579.6 H48.4 a1.4 1.4 0 0 1 1.4 1.4 V595.8 a1.4 1.4 0 0 1 -1.4 1.4 H21.4 a1.4 1.4 0 0 1 -1.4 -1.4 Z"/>
  <path d="M20 583.2 H49.8"/>
  <!-- QL -->
  <rect x="20" y="713.2" width="32" height="32" rx="4.5" stroke-width="3.4"/>
  <!-- account -->
  <circle cx="36" cy="878.8" r="16.9" stroke-width="2.1"/>
  <circle cx="36" cy="874.8" r="7.2" stroke-width="2.2"/>
  <path d="M25.2 891.4 C27.2 885.6 31 882.6 36 882.6 C41 882.6 44.8 885.6 46.8 891.4" stroke-width="2.2"/>
  <!-- gear -->
  <circle cx="36" cy="950.5" r="4.2" stroke-width="2.8"/>
</svg>
<!-- docker whale -->
<svg style="left:0;top:0" width="72" height="1000">
  <g fill="#868686">
    <path d="M18 656.6 H45.5 C46 652 47.5 650.5 49 650 C50.5 651.5 50.5 653 51 654 C52 654 53.5 655 53.6 656 C52 657 50.5 657.5 49.8 658 C47.5 666.5 40 670.7 30.5 670.7 C22.5 670.7 18.2 665 18 656.6 Z"/>
    <rect x="21" y="653" width="3.6" height="3" /><rect x="25.3" y="653" width="3.6" height="3" /><rect x="29.6" y="653" width="3.6" height="3" /><rect x="33.9" y="653" width="3.6" height="3" /><rect x="38.2" y="653" width="3.6" height="3" />
    <rect x="25.3" y="649.2" width="3.6" height="3" /><rect x="29.6" y="649.2" width="3.6" height="3" /><rect x="33.9" y="649.2" width="3.6" height="3" />
    <rect x="33.9" y="645.2" width="3.6" height="3" />
  </g>
  <!-- QL letters -->
  <g fill="none" stroke="#868686" stroke-width="2.7">
    <ellipse cx="30.3" cy="729" rx="4.9" ry="5.7"/>
    <path d="M30.6 731.6 L35.4 736.4"/>
    <path d="M41.2 722 V734.8 H47.8" stroke-linejoin="miter"/>
  </g>
  <!-- gear outer -->
  <path fill="none" stroke="#868686" stroke-width="2.8" stroke-linejoin="miter" transform="translate(36 950.5) scale(1.08) translate(-36 -950.5)" d="M32.8 934.5 H39.2 L40.2 939.4 L44.2 937 L48.8 941.6 L46.4 945.6 L51.4 946.8 V953.6 L46.4 954.8 L48.8 958.8 L44.2 963.4 L40.2 961 L39.2 966 H32.8 L31.8 961 L27.8 963.4 L23.2 958.8 L25.6 954.8 L20.6 953.6 V946.8 L25.6 945.6 L23.2 941.6 L27.8 937 L31.8 939.4 Z"/>
  <!-- extensions badge -->
  <circle cx="46.7" cy="380.8" r="13.1" fill="#0078d4"/>
  <text x="46.6" y="385.6" text-anchor="middle" style="font-family:'Liberation Sans',sans-serif;font-weight:bold;font-size:13.5px" fill="#ffffff">30</text>
</svg>

<!-- VS Code logo -->
<svg style="left:15px;top:11px" width="24.4" height="23.6" viewBox="0 0 100 100" preserveAspectRatio="none">
  <path fill="#0065a9" d="M96.46 10.8 75.86.87a6.23 6.23 0 0 0-7.1 1.2L1.33 63.58a4.17 4.17 0 0 0 0 6.16l5.51 5a4.17 4.17 0 0 0 5.32.24L93.39 13.4a4.14 4.14 0 0 1 6.64 3.3v-.24a6.25 6.25 0 0 0-3.57-5.66Z"/>
  <path fill="#007acc" d="m96.46 89.2-20.6 9.93a6.23 6.23 0 0 1-7.1-1.2L1.33 36.42a4.17 4.17 0 0 1 0-6.16l5.51-5a4.17 4.17 0 0 1 5.32-.24l81.23 61.58a4.14 4.14 0 0 0 6.64-3.3v.24a6.25 6.25 0 0 1-3.57 5.66Z"/>
  <path fill="#1f9cf0" d="M75.86 99.13a6.24 6.24 0 0 1-7.1-1.2c2.3 2.3 6.24.67 6.24-2.58V4.65c0-3.25-3.94-4.88-6.24-2.58a6.24 6.24 0 0 1 7.1-1.2l20.6 9.9A6.25 6.25 0 0 1 100 16.42v67.16a6.25 6.25 0 0 1-3.54 5.63Z"/>
</svg>

<!-- title bar right controls -->
<svg style="left:0;top:0" width="1920" height="45" fill="none" stroke="#cccccc" stroke-width="1.6">
  <!-- toggle primary sidebar -->
  <rect x="1571" y="13.5" width="20" height="19.5" rx="2"/>
  <path d="M1572 14.4 H1580.4 V32.2 H1572 Z" fill="#cccccc" stroke="none"/>
  <!-- toggle panel -->
  <rect x="1603.5" y="13.5" width="20.5" height="19.5" rx="2"/>
  <path d="M1604.5 25.6 H1623 V32.2 H1604.5 Z" fill="#cccccc" stroke="none"/>
  <!-- toggle secondary sidebar -->
  <rect x="1637" y="13.5" width="20" height="19.5" rx="2"/>
  <path d="M1648.2 14.4 H1656.2 V32.2 H1648.2 Z" fill="#cccccc" stroke="none"/>
  <path d="M1670.5 10.8 V35" stroke="#cccccc" stroke-width="1.2"/>
  <!-- customize layout -->
  <rect x="1685" y="15" width="8" height="16.6" rx="1.6"/>
  <rect x="1697" y="15" width="6.6" height="6" rx="1.4"/>
  <rect x="1697" y="25.4" width="6.6" height="6" rx="1.4"/>
  <!-- minimize -->
  <path d="M1740 22.8 H1757" stroke-width="1.5"/>
  <!-- restore -->
  <rect x="1809.8" y="18.6" width="12.4" height="11.8"/>
  <path d="M1813 18.6 V14.8 H1825.2 V27 H1822.2"/>
  <!-- close -->
  <path d="M1877.6 14.4 L1893.6 30.2 M1893.6 14.4 L1877.6 30.2" stroke-width="1.9"/>
</svg>

<!-- tab elephant + close -->
<svg style="left:0;top:0" width="700" height="140">
  <g fill="#a074c4">
    <path d="M92.4 68 C92.4 65.4 94.2 63.8 97 63.8 H103.4 C107.6 63.8 110.2 66.2 110.4 69 L110.9 70.4 L109.6 71.6 L108.7 76.8 H105 V73.4 H101.4 V76.8 H98.4 L97.8 72.6 L97 73 L97.4 75.8 L95.6 76.8 L94 74.8 C94.6 73.6 94.4 72.4 93.4 71.6 C92.6 70.8 92.4 69.6 92.4 68 Z"/>
    <path d="M100.7 64.2 V68.6 C100.7 70.4 99.6 71.2 98.4 71.2 C97.6 71.2 97.2 70.8 97 70.2" stroke="#3a2f48" stroke-width="0.8" fill="none"/><circle cx="94.8" cy="68.2" r="0.55" fill="#3a2f48"/>
  </g>
  <g fill="#a074c4" transform="translate(9 44.5)">
    <path d="M92.4 68 C92.4 65.4 94.2 63.8 97 63.8 H103.4 C107.6 63.8 110.2 66.2 110.4 69 L110.9 70.4 L109.6 71.6 L108.7 76.8 H105 V73.4 H101.4 V76.8 H98.4 L97.8 72.6 L97 73 L97.4 75.8 L95.6 76.8 L94 74.8 C94.6 73.6 94.4 72.4 93.4 71.6 C92.6 70.8 92.4 69.6 92.4 68 Z"/>
    <path d="M100.7 64.2 V68.6 C100.7 70.4 99.6 71.2 98.4 71.2 C97.6 71.2 97.2 70.8 97 70.2" stroke="#3a2f48" stroke-width="0.8" fill="none"/><circle cx="94.8" cy="68.2" r="0.55" fill="#3a2f48"/>
  </g>
  <path d="M222.4 64.4 L236.2 77.8 M236.2 64.4 L222.4 77.8" stroke="#ffffff" stroke-width="1.7" fill="none"/>
  <!-- breadcrumb chevrons -->
  <path d="M212.2 106.6 L218.8 113.6 L212.2 120.6 M387.2 106.6 L393.8 113.6 L387.2 120.6 M472.2 106.6 L478.8 113.6 L472.2 120.6" stroke="#a9a9a9" stroke-width="1.5" fill="none"/>
  <!-- Foo class icon (orange) -->
  <g fill="none" stroke="#ee9d28" stroke-width="1.55" stroke-linejoin="round">
    <path d="M404.4 109.9 L410.7 103.6 L414.6 107.3 L408.3 113.6 Z"/>
    <path d="M419.3 113 L422.3 109.8 L424.8 112.2 L421.7 115.4 Z"/>
    <path d="M418.8 120.6 L422.2 117.6 L424.6 120 L421.3 123.3 Z"/>
    <path d="M410.6 112.4 V120.3 H418.6 M410.6 112.9 H419.2"/>
  </g>
  <!-- cube icon (purple) -->
  <g fill="none" stroke="#b180d7" stroke-width="1.6" stroke-linejoin="round">
    <path d="M499 104.2 L507.6 109 V118.6 L499.1 122.9 L490.6 118.6 V109 Z"/>
    <path d="M490.8 109.3 L499.1 113.6 L507.4 109.3 M499.1 113.6 V122.6"/>
  </g>
</svg>

<!-- editor actions -->
<svg style="left:0;top:0" width="1920" height="100" fill="none" stroke="#cccccc" stroke-width="1.6" stroke-linejoin="round">
  <path d="M1779 61.6 V80 L1797 70.8 Z"/>
  <path d="M1806.8 68.6 L1812 73.6 L1817.2 68.6" stroke-width="1.4"/>
  <rect x="1838" y="61.4" width="19" height="18.4" rx="1.5"/>
  <path d="M1847.5 61.4 V79.8"/>
  <circle cx="1877.6" cy="71" r="1.5" fill="#cccccc" stroke="none"/>
  <circle cx="1885.6" cy="71" r="1.5" fill="#cccccc" stroke="none"/>
  <circle cx="1893.6" cy="71" r="1.5" fill="#cccccc" stroke="none"/>
</svg>

<!-- panel actions -->
<svg style="left:0;top:0" width="1920" height="700" fill="none" stroke="#cccccc" stroke-width="1.6" stroke-linejoin="round">
  <rect x="1629" y="643.2" width="19.6" height="19.6" rx="1.6"/>
  <path d="M1635.6 647.6 L1641.4 653 L1635.6 658.4"/>
  <path d="M1721.2 643 V662 M1711.8 652.4 H1730.8" stroke-width="1.8"/>
  <path d="M1741 651 L1746.2 656 L1751.4 651" stroke-width="1.4"/>
  <rect x="1771.6" y="643.6" width="18.6" height="18" rx="1.5"/>
  <path d="M1780.9 643.6 V661.6"/>
  <path d="M1810 645.4 H1827.4 M1815 645.4 V643 H1822.4 V645.4 M1812 646.4 L1813 661.2 H1824.4 L1825.4 646.4 M1816.4 649 V658.6 M1818.7 649 V658.6 M1821 649 V658.6"/>
  <path d="M1850.6 656.4 L1858.3 648.8 L1866 656.4" stroke-width="1.7"/>
  <path d="M1885.2 646.6 L1898.2 659.6 M1898.2 646.6 L1885.2 659.6" stroke-width="1.7"/>
</svg>

<!-- status bar icons -->
<svg style="left:0;top:0" width="1920" height="1020" fill="none" stroke="#ffffff" stroke-width="1.6" stroke-linejoin="round">
  <path d="M19.4 1000.4 L24.9 1005.7 L19.5 1011.2 M31.6 994.8 L26 1000.3 L31.6 1005.6" stroke-linecap="round" stroke-linejoin="miter" stroke-width="1.7"/>
  <circle cx="179.3" cy="1003.2" r="8.6"/>
  <path d="M175.6 999.5 L183 1006.9 M183 999.5 L175.6 1006.9"/>
  <path d="M221 994.6 L230 1011.2 H212 Z"/>
  <path d="M221 1000 V1005.4" stroke-width="1.8"/>
  <circle cx="221" cy="1008" r="0.9" fill="#ffffff" stroke="none"/>
  <!-- feedback person -->
  <circle cx="1839.4" cy="1002.6" r="3.6" stroke-width="1.5"/>
  <path d="M1833.4 1012.4 C1833.6 1008.6 1836.2 1006.8 1839.4 1006.8 C1842.6 1006.8 1845.2 1008.6 1845.4 1012.4" stroke-width="1.5"/>
  <path d="M1845.4 1004.8 L1851.6 999 V995.6 M1851.6 1002.4 H1848.4 M1840 995.8 H1851.6" stroke-width="1.4"/>
  <!-- bell -->
  <path d="M1879.8 1009.6 H1894.6 C1893 1008 1892.4 1006 1892.4 1003.4 V1001.4 C1892.4 997.6 1890 995.4 1887.2 995.4 C1884.4 995.4 1882 997.6 1882 1001.4 V1003.4 C1882 1006 1881.4 1008 1879.8 1009.6 Z" stroke-width="1.5"/>
  <path d="M1885.2 1011.2 C1885.8 1012.8 1888.6 1012.8 1889.2 1011.2" stroke-width="1.5"/>
</svg>
<!-- seebug watermark -->
<svg style="left:0;top:0" width="1920" height="1020">
  <circle cx="1790.2" cy="990.2" r="16.8" fill="none" stroke="rgba(235,235,235,0.85)" stroke-width="1.3"/>
  <path d="M1784.5 996 C1786 989.5 1791 986.8 1796.6 986.8 C1803.6 986.8 1809 992.4 1809 999.4 C1809 1006.4 1803.6 1011.8 1796.6 1011.8 C1790 1011.8 1784 1005 1784.5 996 Z" fill="rgba(225,236,248,0.85)"/>
  <path d="M1789 987 L1796 1011" stroke="rgba(0,122,204,0.6)" stroke-width="1"/>
  <path d="M1788.6 982.6 L1790 985.6 L1793 985.8 L1790.6 987.6 L1791.4 990.6 L1788.6 988.8 L1786 990.6 L1786.8 987.6 L1784.4 985.8 L1787.4 985.6 Z" fill="rgba(225,236,248,0.8)"/>
  <text x="1815.8" y="997.6" style="font-family:'Liberation Sans',sans-serif;font-size:21px" fill="rgba(225,232,240,0.85)" stroke="rgba(40,40,40,0.35)" stroke-width="0.4" textLength="75.4" lengthAdjust="spacingAndGlyphs">Seebug</text>
</svg>

</body></html>
